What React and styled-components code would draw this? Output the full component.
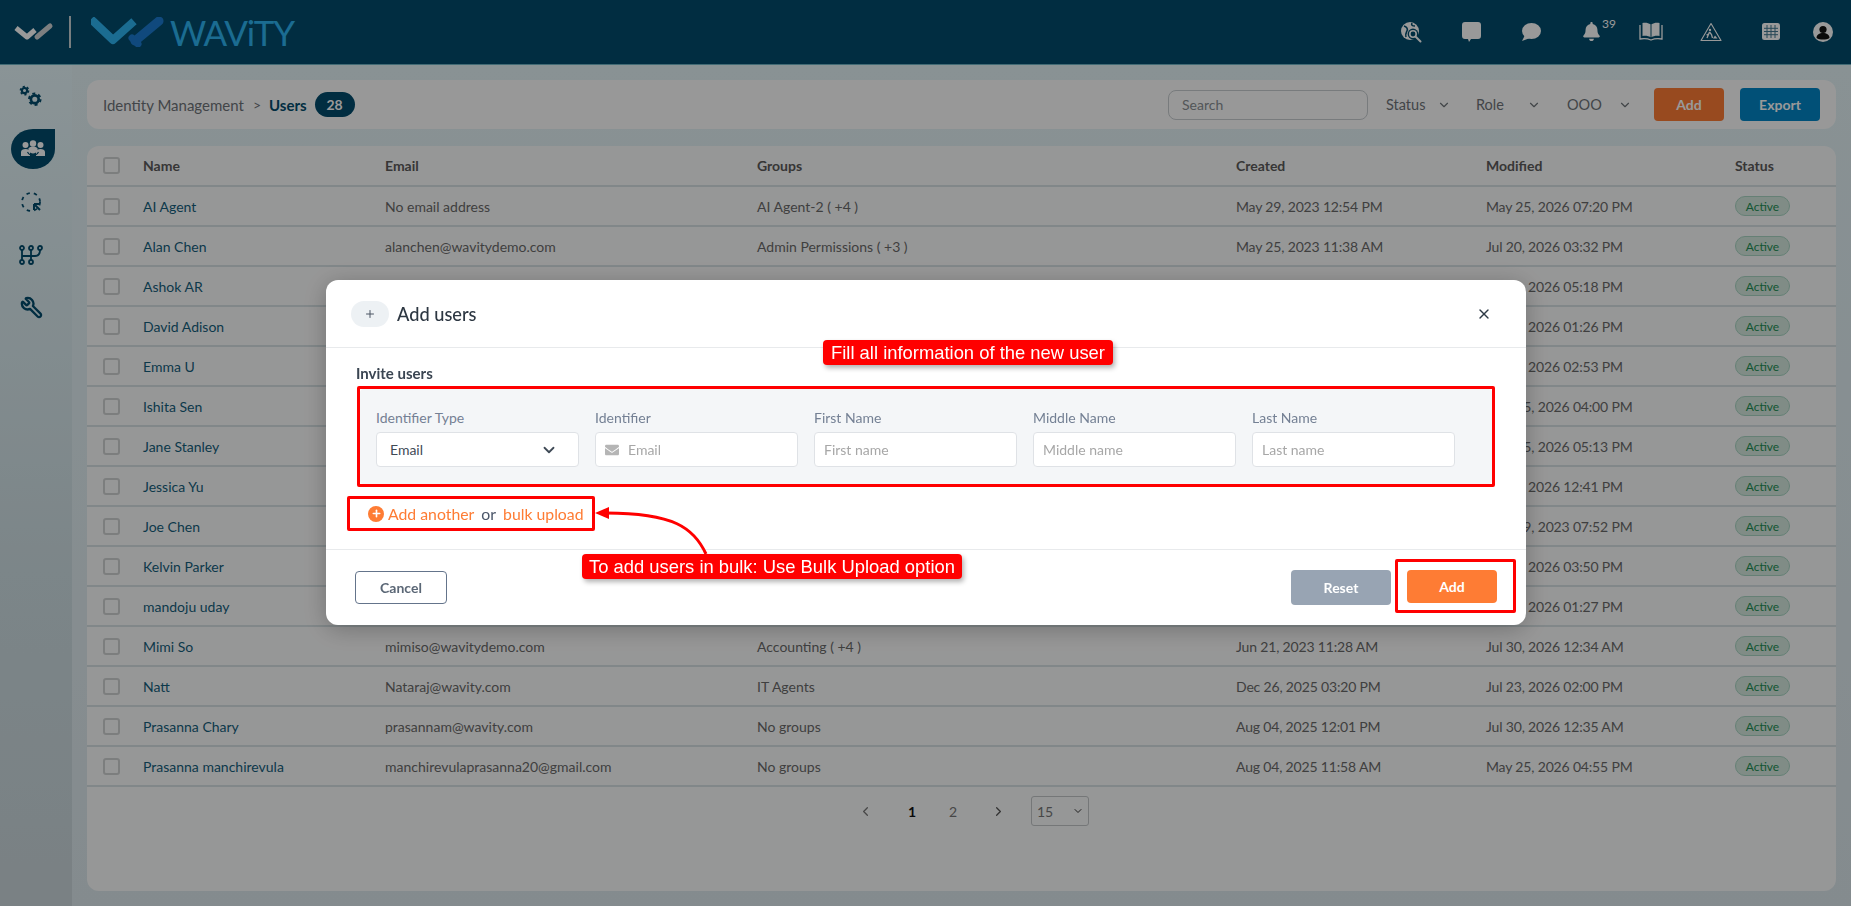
import React from "react";
import styled, { createGlobalStyle } from "styled-components";
import { ChevronDown, ChevronLeft, ChevronRight, Plus, X, Wrench } from "lucide-react";
import { FaBell, FaEnvelope } from "react-icons/fa";

const NAVY = "#024c6d";
const ORANGE = "#fe7c34";
const RED = "#ff0000";

const GlobalStyle = createGlobalStyle`
  html, body {
    margin: 0;
    padding: 0;
    height: 100%;
    overflow: hidden;
    font-family: Lato, "Open Sans", sans-serif;
  }
  * { box-sizing: border-box; }
`;

const USERS = [
  ["AI Agent", "No email address", "AI Agent-2 ( +4 )", "May 29, 2023 12:54 PM", "May 25, 2026 07:20 PM"],
  ["Alan Chen", "alanchen@wavitydemo.com", "Admin Permissions ( +3 )", "May 25, 2023 11:38 AM", "Jul 20, 2026 03:32 PM"],
  ["Ashok AR", "ashok@wavitydemo.com", "Accounting ( +2 )", "May 25, 2023 11:40 AM", "Jul 30, 2026 05:18 PM"],
  ["David Adison", "david@wavitydemo.com", "IT Agents ( +1 )", "May 25, 2023 11:42 AM", "Jul 20, 2026 01:26 PM"],
  ["Emma U", "emma@wavitydemo.com", "IT Agents", "May 25, 2023 11:44 AM", "Jul 20, 2026 02:53 PM"],
  ["Ishita Sen", "ishita@wavitydemo.com", "Accounting", "May 25, 2023 11:46 AM", "May 25, 2026 04:00 PM"],
  ["Jane Stanley", "jane@wavitydemo.com", "Accounting ( +1 )", "May 25, 2023 11:48 AM", "May 25, 2026 05:13 PM"],
  ["Jessica Yu", "jessica@wavitydemo.com", "IT Agents", "May 25, 2023 11:50 AM", "Jul 20, 2026 12:41 PM"],
  ["Joe Chen", "joe@wavitydemo.com", "IT Agents", "May 25, 2023 11:52 AM", "May 29, 2023 07:52 PM"],
  ["Kelvin Parker", "kelvin@wavitydemo.com", "Accounting", "May 25, 2023 11:54 AM", "Jul 20, 2026 03:50 PM"],
  ["mandoju uday", "uday@wavity.com", "No groups", "Aug 04, 2025 11:56 AM", "Jul 30, 2026 01:27 PM"],
  ["Mimi So", "mimiso@wavitydemo.com", "Accounting ( +4 )", "Jun 21, 2023 11:28 AM", "Jul 30, 2026 12:34 AM"],
  ["Natt", "Nataraj@wavity.com", "IT Agents", "Dec 26, 2025 03:20 PM", "Jul 23, 2026 02:00 PM"],
  ["Prasanna Chary", "prasannam@wavity.com", "No groups", "Aug 04, 2025 12:01 PM", "Jul 30, 2026 12:35 AM"],
  ["Prasanna manchirevula", "manchirevulaprasanna20@gmail.com", "No groups", "Aug 04, 2025 11:58 AM", "May 25, 2026 04:55 PM"],
];

const Page = styled.div`
  height: 100vh;
  display: flex;
  flex-direction: column;
`;

const TopBar = styled.header`
  height: 65px;
  flex: none;
  display: flex;
  align-items: center;
  justify-content: space-between;
  padding: 0 8px 1px 14px;
  background: ${NAVY};
  border-bottom: 1px solid #6fb3c4;
`;

const Brand = styled.div`
  display: flex;
  align-items: center;
`;

const BrandDivider = styled.span`
  width: 2px;
  height: 32px;
  margin: 0 20px 0 15px;
  background: #c8d2d6;
`;

const BrandName = styled.span`
  margin-left: 5px;
  font-size: 35px;
  line-height: 40px;
  color: #2db4f2;
  letter-spacing: -1.2px;
`;

const TopIcons = styled.div`
  display: flex;
  align-items: center;
`;

const TopIcon = styled.div`
  position: relative;
  width: ${(p) => (p.$last ? "40px" : "60px")};
  margin-left: ${(p) => (p.$last ? "2px" : "0")};
  display: flex;
  justify-content: center;
  color: #fff;
`;

const BellCount = styled.sup`
  position: absolute;
  left: 41px;
  top: -5px;
  font-size: 12px;
  line-height: 14px;
  color: #fff;
`;

const Body = styled.div`
  flex: 1;
  min-height: 0;
  display: flex;
`;

const SideNav = styled.nav`
  width: 72px;
  flex: none;
  padding-top: 4px;
  background: linear-gradient(180deg, #e6f7fb 0%, #cfdfe4 60%, #cbd7dc 100%);
`;

const NavItem = styled.div`
  width: 44px;
  height: 53px;
  margin-left: 9px;
  display: flex;
  align-items: center;
  justify-content: center;
  color: ${NAVY};
`;

const ActiveDrop = styled.div`
  width: 44px;
  height: 40px;
  margin-left: 4px;
  flex: none;
  display: flex;
  align-items: center;
  justify-content: center;
  background: ${NAVY};
  border-radius: 50% 0 50% 50%;
`;

const Main = styled.main`
  flex: 1;
  min-width: 0;
  display: flex;
  flex-direction: column;
  gap: 17px;
  padding: 15px;
  background: linear-gradient(180deg, #e4f3f7 0%, #dde8ed 100%);
`;

const ToolBar = styled.div`
  height: 49px;
  flex: none;
  display: flex;
  align-items: center;
  padding: 0 16px;
  background: #fdfefe;
  border-radius: 12px;
`;

const Crumbs = styled.div`
  flex: 1;
  display: flex;
  align-items: center;
  font-size: 15px;
  color: #6f7479;
`;

const CrumbSep = styled.span`
  margin: 0 8px 0 9px;
  font-size: 14px;
`;

const CrumbCurrent = styled.strong`
  font-weight: 700;
  color: ${NAVY};
`;

const CountBadge = styled.span`
  width: 40px;
  height: 25px;
  margin-left: 8px;
  display: flex;
  align-items: center;
  justify-content: center;
  border-radius: 13px;
  background: ${NAVY};
  color: #fff;
  font-size: 14px;
  font-weight: 700;
`;

const SearchBox = styled.input`
  width: 200px;
  height: 30px;
  margin-right: 18px;
  padding: 0 13px;
  border: 1px solid #c8cdd0;
  border-radius: 8px;
  background: transparent;
  font: 14px Lato, sans-serif;
  &::placeholder { color: #8a8f93; }
`;

const Filters = styled.div`
  display: grid;
  grid-template-columns: 90px 91px 87px;
`;

const Filter = styled.div`
  display: flex;
  align-items: center;
  justify-content: space-between;
  padding-right: ${(p) => p.$pad}px;
  font-size: 14.5px;
  color: #6f7479;
`;

const ToolButton = styled.button`
  width: ${(p) => p.$w}px;
  height: 33px;
  margin-left: ${(p) => p.$gap}px;
  border: 0;
  border-radius: 4px;
  background: ${(p) => p.$bg};
  color: #fff;
  font: 700 14px Lato, sans-serif;
`;

const TableCard = styled.section`
  flex: 1;
  min-height: 0;
  background: #fbfcfc;
  border-radius: 12px;
`;

const Row = styled.div`
  height: ${(p) => (p.$head ? "41px" : "40px")};
  display: grid;
  grid-template-columns: 40px 242px 372px 479px 250px 249px 1fr;
  align-items: center;
  padding-left: 16px;
  border-bottom: 2px solid #d7e1e4;
  font-size: 14px;
  font-weight: ${(p) => (p.$head ? 700 : 400)};
  color: ${(p) => (p.$head ? "#5c5a5a" : "#6a6a6a")};
`;

const Check = styled.span`
  width: 17px;
  height: 17px;
  border: 2px solid #cfd2d3;
  border-radius: 3px;
`;

const NameCell = styled.span`
  color: ${(p) => (p.$head ? "inherit" : "#155f7d")};
`;

const DateCell = styled.span`
  letter-spacing: -0.17px;
`;

const StatusPill = styled.span`
  width: 55px;
  height: 20px;
  display: flex;
  align-items: center;
  justify-content: center;
  border: 1px solid #a9d6c4;
  border-radius: 10px;
  background: #d5eadf;
  color: #1f8f55;
  font-size: 12px;
`;

const Pager = styled.div`
  display: flex;
  align-items: center;
  height: 30px;
  margin-top: 9px;
  padding-left: 755px;
  font-size: 14px;
  color: #777;
`;

const PageCell = styled.span`
  width: ${(p) => p.$w}px;
  display: flex;
  justify-content: center;
  font-weight: ${(p) => (p.$on ? 700 : 400)};
  color: ${(p) => (p.$on ? "#111" : "#777")};
`;

const PageSize = styled.div`
  width: 58px;
  height: 30px;
  margin-left: 5px;
  padding: 0 4px 0 5px;
  display: flex;
  align-items: center;
  justify-content: space-between;
  border: 1px solid #c3c6c8;
  border-radius: 3px;
  color: #777;
  svg { color: #333; }
`;

const Backdrop = styled.div`
  position: fixed;
  inset: 0;
  padding: 0 0 1px 1px;
  display: flex;
  align-items: center;
  justify-content: center;
  background: rgba(0, 0, 0, 0.4);
`;

const Modal = styled.div`
  position: relative;
  width: 1200px;
  height: 345px;
  background: #fff;
  border-radius: 12px;
  box-shadow: 0 4px 24px rgba(0, 0, 0, 0.25);
  color: #2e3a46;
`;

const ModalHead = styled.div`
  height: 68px;
  display: flex;
  align-items: center;
  padding: 0 34px 0 25px;
  border-bottom: 1px solid #e8eaec;
`;

const PlusPill = styled.span`
  width: 38px;
  height: 26px;
  margin-right: 8px;
  display: flex;
  align-items: center;
  justify-content: center;
  border-radius: 13px;
  background: #edf1f4;
  color: #4b5563;
`;

const ModalTitle = styled.h2`
  flex: 1;
  margin: 0;
  font-size: 18.2px;
  font-weight: 500;
  color: #2d3742;
`;

const ModalBody = styled.div`
  height: 201px;
  padding: 15px 0 0 30px;
`;

const SectionTitle = styled.div`
  height: 20px;
  margin-bottom: 6px;
  font-size: 15px;
  line-height: 20px;
  font-weight: 700;
  color: #3a4552;
`;

const FormPanel = styled.div`
  position: relative;
  width: 1132px;
  height: 95px;
  margin-left: 4px;
  padding: 19px 16px 0;
  display: flex;
  gap: 16px;
  background: #f4f6f8;
  border-radius: 4px;
`;

const Field = styled.label`
  width: 203px;
  display: flex;
  flex-direction: column;
  gap: 4px;
`;

const FieldLabel = styled.span`
  height: 20px;
  font-size: 14px;
  line-height: 20px;
  color: #748094;
`;

const InputShell = styled.div`
  height: 35px;
  display: flex;
  align-items: center;
  gap: 9px;
  padding: 0 ${(p) => (p.$select ? "20px" : "10px")} 0 ${(p) => (p.$select ? "13px" : "9px")};
  justify-content: ${(p) => (p.$select ? "space-between" : "flex-start")};
  background: #fff;
  border: 1px solid #dfe2e6;
  border-radius: 4px;
  font-size: 14px;
  color: #3f4a56;
`;

const TextInput = styled.input`
  flex: 1;
  min-width: 0;
  border: 0;
  padding: 0;
  outline: 0;
  background: transparent;
  font: 14px Lato, sans-serif;
  &::placeholder { color: #a7a7a7; }
`;

const MoreRow = styled.div`
  position: relative;
  width: 242px;
  height: 29px;
  margin: 15px 0 0 -6px;
  padding-left: 18px;
  display: flex;
  align-items: center;
  font-size: 15.8px;
  color: #4a5568;
`;

const PlusDot = styled.span`
  width: 16px;
  height: 16px;
  margin-right: 4px;
  display: flex;
  align-items: center;
  justify-content: center;
  border-radius: 50%;
  background: ${ORANGE};
  color: #fff;
`;

const LinkText = styled.span`
  color: ${ORANGE};
`;

const OrText = styled.span`
  margin: 0 7px;
`;

const ModalFoot = styled.div`
  height: 76px;
  display: flex;
  align-items: center;
  padding: 0 29px 0 29px;
  border-top: 1px solid #e8eaec;
`;

const CancelButton = styled.button`
  width: 92px;
  height: 33px;
  margin-right: auto;
  background: #fff;
  border: 1px solid #64748b;
  border-radius: 4px;
  color: #5b6776;
  font: 700 14px Lato, sans-serif;
`;

const ResetButton = styled.button`
  width: 100px;
  height: 35px;
  margin-right: 16px;
  border: 0;
  border-radius: 4px;
  background: #98a4b3;
  color: #fff;
  font: 700 14px Lato, sans-serif;
`;

const AddButton = styled.button`
  position: relative;
  width: 90px;
  height: 33px;
  margin-bottom: 2px;
  border: 0;
  border-radius: 4px;
  background: ${ORANGE};
  color: #fff;
  font: 700 14px Lato, sans-serif;
`;

// red boxes and callouts drawn over the shot
const RedBox = styled.span`
  position: absolute;
  inset: ${(p) => p.$inset};
  border: 3px solid ${RED};
  border-radius: 2px;
  pointer-events: none;
`;

const Callout = styled.div`
  position: absolute;
  left: ${(p) => p.$x}px;
  top: ${(p) => p.$y}px;
  width: ${(p) => p.$w}px;
  height: 25px;
  display: flex;
  align-items: center;
  justify-content: center;
  background: ${RED};
  border-radius: 4px;
  box-shadow: 2px 3px 5px rgba(0, 0, 0, 0.3);
  color: #fff;
  font-family: "Liberation Sans", Arial, sans-serif;
  font-size: 18.4px;
  white-space: nowrap;
`;

const CalloutArrow = styled.svg`
  position: absolute;
  left: 264px;
  top: 224px;
`;

const SmallLogo = () => (
  <svg width="40" height="20" viewBox="0 0 40 20">
    <path d="M2 6l11 9 8-7" fill="none" stroke="#fff" strokeWidth="5" strokeLinejoin="round" />
    <path d="M23 15l13-11" fill="none" stroke="#d0d4d6" strokeWidth="5" strokeLinecap="round" />
  </svg>
);

const BigLogo = () => (
  <svg width="74" height="30" viewBox="0 0 74 30">
    <path d="M3 5l19 18L40 7" fill="none" stroke="#2db4f2" strokeWidth="8" strokeLinecap="square" strokeLinejoin="round" />
    <path d="M44 24l24-20" fill="none" stroke="#1c7bd0" strokeWidth="9" strokeLinecap="round" />
    <path d="M41 21l6 6" fill="none" stroke="#1c7bd0" strokeWidth="7" strokeLinecap="round" />
  </svg>
);

const GlobeSearch = () => (
  <svg width="22" height="22" viewBox="0 0 22 22">
    <circle cx="10" cy="10" r="9" fill="#fff" />
    <path d="M4 5c3 1 4 3 3 5s-2 3-1 6M12 2c-1 2 0 3 3 3" fill="none" stroke={NAVY} strokeWidth="1.6" />
    <circle cx="13" cy="13" r="5.4" fill={NAVY} />
    <circle cx="13" cy="13" r="3.2" fill="none" stroke="#fff" strokeWidth="1.6" />
    <path d="M16 16l4.5 4.5" stroke="#fff" strokeWidth="2" strokeLinecap="round" />
  </svg>
);

const SquareChat = () => (
  <svg width="19" height="20" viewBox="0 0 19 20">
    <path d="M3 0h13a3 3 0 0 1 3 3v11a3 3 0 0 1-3 3H9l-2 3-1-3H3a3 3 0 0 1-3-3V3a3 3 0 0 1 3-3z" fill="currentColor" />
  </svg>
);

const RoundChat = () => (
  <svg width="20" height="18" viewBox="0 0 20 18">
    <ellipse cx="10.5" cy="8" rx="9.5" ry="8" fill="currentColor" />
    <path d="M4 12L1 18l8-3z" fill="currentColor" />
  </svg>
);

const Book = () => (
  <svg width="24" height="19" viewBox="0 0 24 19">
    <path d="M3.5 1c3-.8 6 0 8 1.3v13c-2-1.3-5-1.8-8-1.2zM20.5 1c-3-.8-6 0-8 1.3v13c2-1.3 5-1.8 8-1.2z" fill="currentColor" />
    <path d="M1 3v14c4-.8 8-.3 11 1 3-1.3 7-1.8 11-1V3" fill="none" stroke="currentColor" strokeWidth="1.3" />
  </svg>
);

const WorkSign = () => (
  <svg width="22" height="20" viewBox="0 0 22 20">
    <path d="M11 1.5L21 18.5H1z" fill="none" stroke="currentColor" strokeWidth="1.1" strokeLinejoin="round" />
    <circle cx="10" cy="8" r="1.2" fill="currentColor" />
    <path d="M9.5 10l-2.5 6M9.5 10l2 2.5 1 3.5M8.5 12l-2 1" fill="none" stroke="currentColor" strokeWidth="1.3" />
    <path d="M13 16.5l2-3 2.5 3z" fill="currentColor" />
  </svg>
);

const GridMenu = () => (
  <svg width="18" height="17" viewBox="0 0 18 17">
    <rect width="18" height="17" rx="2.5" fill="currentColor" />
    <path d="M5 2v13M9 2v13M13 2v13M2 5.3h14M2 8.5h14M2 11.7h14" stroke={NAVY} strokeWidth="1" opacity=".75" />
  </svg>
);

const Avatar = () => (
  <svg width="20" height="20" viewBox="0 0 20 20">
    <circle cx="10" cy="10" r="10" fill="currentColor" />
    <circle cx="10" cy="7.5" r="3.6" fill="#111" />
    <path d="M3.5 16c0-3.5 3-5 6.5-5s6.5 1.5 6.5 5c-1.5 1-4 1.5-6.5 1.5s-5-.5-6.5-1.5z" fill="#111" />
  </svg>
);

const Gear = ({ cx, cy, r, w }) => (
  <g fill="none" stroke="currentColor">
    <circle cx={cx} cy={cy} r={r} strokeWidth={w} />
    <circle cx={cx} cy={cy} r={r + w * 0.7} strokeWidth={w * 0.7} strokeDasharray={`${(r + w * 0.7) * 0.52} ${(r + w * 0.7) * 0.52}`} />
  </g>
);

const Gears = () => (
  <svg width="26" height="24" viewBox="0 0 24 22">
    <Gear cx={6} cy={6} r={2.4} w={2} />
    <Gear cx={15.5} cy={14} r={3.6} w={2.5} />
  </svg>
);

const Team = () => (
  <svg width="24" height="17" viewBox="0 0 24 17">
    <circle cx="4.5" cy="5" r="3" fill="#fff" />
    <circle cx="19.5" cy="5" r="3" fill="#fff" />
    <path d="M0 16v-4c0-2 2-3 4.5-3S9 10 9 12v4zM15 16v-4c0-2 2-3 4.5-3s4.5 1 4.5 3v4z" fill="#fff" />
    <circle cx="12" cy="3.500" r="3.2" fill="#fff" />
    <path d="M6.500 12c1.500 2.500 3.500 3.500 5.500 3.500s4-1 5.500-3.500" fill="none" stroke={NAVY} strokeWidth="1.2" />
    <path d="M7.500 8.500c1-1.500 2.700-2 4.500-2s3.500.5 4.500 2v2.500c-1 1.500-2.700 2.500-4.500 2.500s-3.500-1-4.500-2.500z" fill="#fff" />
  </svg>
);

const DashedPick = () => (
  <svg width="22" height="22" viewBox="0 0 22 22">
    <circle cx="11" cy="11" r="9" fill="none" stroke="currentColor" strokeWidth="1.8" strokeDasharray="3.4 4.1" />
    <path d="M14 13h6M14 13v6M14 13l6 6" stroke="currentColor" strokeWidth="2" fill="none" />
  </svg>
);

const FlowTree = () => (
  <svg width="24" height="20" viewBox="0 0 24 20" fill="none" stroke="currentColor" strokeWidth="1.8">
    <circle cx="3" cy="3" r="2" />
    <circle cx="12" cy="3" r="2" />
    <circle cx="21" cy="3" r="2" />
    <circle cx="3" cy="17" r="2" />
    <circle cx="12" cy="17" r="2" />
    <path d="M3 5v10M12 5v10M21 5c0 4-2 6-5 6H3" />
  </svg>
);

const FlippedWrench = styled(Wrench)`
  transform: scaleX(-1);
`;

const NAV_ICONS = [<Gears key="g" />, null, <DashedPick key="d" />, <FlowTree key="f" />, <FlippedWrench key="w" size={23} strokeWidth={2.4} />];

const CHECK_COLUMNS = ["Name", "Email", "Groups", "Created", "Modified", "Status"];

const App = () => {
  return (
    <Page>
      <GlobalStyle />
      <TopBar>
        <Brand>
          <SmallLogo />
          <BrandDivider />
          <BigLogo />
          <BrandName>WAViTY</BrandName>
        </Brand>
        <TopIcons>
          <TopIcon><GlobeSearch /></TopIcon>
          <TopIcon><SquareChat /></TopIcon>
          <TopIcon><RoundChat /></TopIcon>
          <TopIcon>
            <FaBell size={19} />
            <BellCount>39</BellCount>
          </TopIcon>
          <TopIcon><Book /></TopIcon>
          <TopIcon><WorkSign /></TopIcon>
          <TopIcon><GridMenu /></TopIcon>
          <TopIcon $last><Avatar /></TopIcon>
        </TopIcons>
      </TopBar>
      <Body>
        <SideNav>
          {NAV_ICONS.map((icon, i) => (
            <NavItem key={i}>
              {icon || (
                <ActiveDrop>
                  <Team />
                </ActiveDrop>
              )}
            </NavItem>
          ))}
        </SideNav>
        <Main>
          <ToolBar>
            <Crumbs>
              Identity Management
              <CrumbSep>&gt;</CrumbSep>
              <CrumbCurrent>Users</CrumbCurrent>
              <CountBadge>28</CountBadge>
            </Crumbs>
            <SearchBox placeholder="Search" />
            <Filters>
              <Filter $pad={25}>Status <ChevronDown size={14} /></Filter>
              <Filter $pad={26}>Role <ChevronDown size={14} /></Filter>
              <Filter $pad={22}>OOO <ChevronDown size={14} /></Filter>
            </Filters>
            <ToolButton $w={70} $gap={0} $bg={ORANGE}>Add</ToolButton>
            <ToolButton $w={80} $gap={16} $bg="#0385c6">Export</ToolButton>
          </ToolBar>
          <TableCard>
            <Row $head>
              <Check />
              {CHECK_COLUMNS.map((c) => (
                <span key={c}>{c}</span>
              ))}
            </Row>
            {USERS.map(([name, email, groups, created, modified]) => (
              <Row key={name}>
                <Check />
                <NameCell>{name}</NameCell>
                <span>{email}</span>
                <span>{groups}</span>
                <DateCell>{created}</DateCell>
                <DateCell>{modified}</DateCell>
                <StatusPill>Active</StatusPill>
              </Row>
            ))}
            <Pager>
              <PageCell $w={46}><ChevronLeft size={15} /></PageCell>
              <PageCell $w={48} $on>1</PageCell>
              <PageCell $w={34}>2</PageCell>
              <PageCell $w={56}><ChevronRight size={15} color="#555" /></PageCell>
              <PageSize>15 <ChevronDown size={12} /></PageSize>
            </Pager>
          </TableCard>
        </Main>
      </Body>
      <Backdrop>
        <Modal>
          <ModalHead>
            <PlusPill><Plus size={12} strokeWidth={2} /></PlusPill>
            <ModalTitle>Add users</ModalTitle>
            <X size={16} strokeWidth={2} />
          </ModalHead>
          <ModalBody>
            <SectionTitle>Invite users</SectionTitle>
            <FormPanel>
              <Field>
                <FieldLabel>Identifier Type</FieldLabel>
                <InputShell $select>Email <ChevronDown size={18} strokeWidth={2.4} /></InputShell>
              </Field>
              <Field>
                <FieldLabel>Identifier</FieldLabel>
                <InputShell>
                  <FaEnvelope size={14} color="#b5b5b5" />
                  <TextInput placeholder="Email" />
                </InputShell>
              </Field>
              <Field>
                <FieldLabel>First Name</FieldLabel>
                <InputShell><TextInput placeholder="First name" /></InputShell>
              </Field>
              <Field>
                <FieldLabel>Middle Name</FieldLabel>
                <InputShell><TextInput placeholder="Middle name" /></InputShell>
              </Field>
              <Field>
                <FieldLabel>Last Name</FieldLabel>
                <InputShell><TextInput placeholder="Last name" /></InputShell>
              </Field>
              <RedBox $inset="-3px" />
            </FormPanel>
            <MoreRow>
              <PlusDot><Plus size={11} strokeWidth={3.5} /></PlusDot>
              <LinkText>Add another</LinkText>
              <OrText>or</OrText>
              <LinkText>bulk upload</LinkText>
              <RedBox $inset="-3px" />
            </MoreRow>
          </ModalBody>
          <ModalFoot>
            <CancelButton>Cancel</CancelButton>
            <ResetButton>Reset</ResetButton>
            <AddButton>
              Add
              <RedBox $inset="-11px -19px -10px -12px" />
            </AddButton>
          </ModalFoot>
          <Callout $x={497} $y={60} $w={290}>Fill all information of the new user</Callout>
          <CalloutArrow width="120" height="52" viewBox="0 0 120 52">
            <path d="M116 50C104 24 84 9 16 9" fill="none" stroke={RED} strokeWidth="3" />
            <path d="M5 9l14-6v12z" fill={RED} />
          </CalloutArrow>
          <Callout $x={256} $y={274} $w={380}>To add users in bulk: Use Bulk Upload option</Callout>
        </Modal>
      </Backdrop>
    </Page>
  );
};

export default App;
